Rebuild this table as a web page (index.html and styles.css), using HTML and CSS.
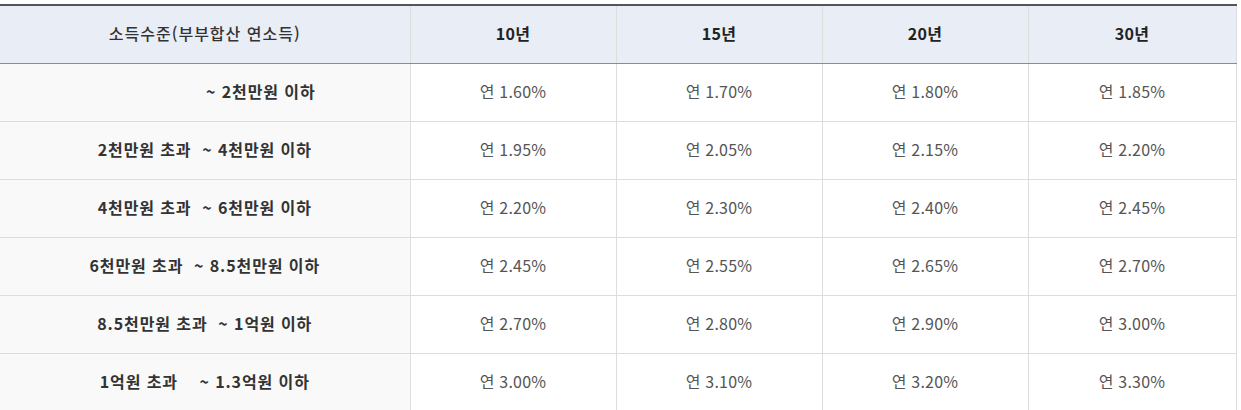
FILE: index.html
```html
<!DOCTYPE html>
<html lang="ko">
<head>
<meta charset="utf-8">
<link rel="stylesheet" href="styles.css">
</head>
<body>
<div class="wrap">
<table class="rate">
<colgroup>
<col class="c-income">
<col class="c-year"><col class="c-year"><col class="c-year"><col class="c-last">
</colgroup>
<thead>
<tr>
<th class="h-income">소득수준(부부합산 연소득)</th>
<th>10년</th><th>15년</th><th>20년</th><th>30년</th>
</tr>
</thead>
<tbody>
<tr><th class="lbl first">~ 2천만원 이하</th><td>연 1.60%</td><td>연 1.70%</td><td>연 1.80%</td><td>연 1.85%</td></tr>
<tr><th class="lbl">2천만원 초과  ~ 4천만원 이하</th><td>연 1.95%</td><td>연 2.05%</td><td>연 2.15%</td><td>연 2.20%</td></tr>
<tr><th class="lbl">4천만원 초과  ~ 6천만원 이하</th><td>연 2.20%</td><td>연 2.30%</td><td>연 2.40%</td><td>연 2.45%</td></tr>
<tr><th class="lbl">6천만원 초과  ~ 8.5천만원 이하</th><td>연 2.45%</td><td>연 2.55%</td><td>연 2.65%</td><td>연 2.70%</td></tr>
<tr><th class="lbl">8.5천만원 초과  ~ 1억원 이하</th><td>연 2.70%</td><td>연 2.80%</td><td>연 2.90%</td><td>연 3.00%</td></tr>
<tr><th class="lbl">1억원 초과    ~ 1.3억원 이하</th><td>연 3.00%</td><td>연 3.10%</td><td>연 3.20%</td><td>연 3.30%</td></tr>
</tbody>
</table>
</div>
</body>
</html>
```

FILE: styles.css
```css
html, body {
  margin: 0;
  padding: 0;
  background: #ffffff;
}
.wrap {
  padding-top: 4px;
  font-family: "Noto Sans CJK KR", "Noto Sans", sans-serif;
}
.rate {
  width: 1236px;
  table-layout: fixed;
  border-collapse: collapse;
  border-top: 2px solid #555555;
  font-size: 16px;
}
.c-income { width: 410px; }
.c-year { width: 206px; }
.c-last { width: 208px; }
.rate th, .rate td {
  height: 54px;
  padding: 0 0 3px 0;
  text-align: center;
  vertical-align: middle;
  border: 1px solid #dddddd;
  line-height: 20px;
}
.rate thead th {
  background: #e9edf5;
  color: #222222;
  font-weight: 700;
  letter-spacing: 0.3px;
  border-top: none;
  border-bottom: 1px solid #8c8c8c;
}
.rate thead th.h-income {
  font-weight: 500;
  color: #333333;
  letter-spacing: 1px;
}
.rate th:first-child, .rate td:first-child {
  border-left: none;
}
.rate tbody th.lbl {
  background: #f9f9f9;
  color: #333333;
  font-weight: 700;
  letter-spacing: 0.9px;
  white-space: pre;
}
.rate tbody th.first {
  padding-left: 112px;
}
.rate tbody td {
  color: #555555;
  font-weight: 400;
  letter-spacing: 0.2px;
  background: #ffffff;
}
```
